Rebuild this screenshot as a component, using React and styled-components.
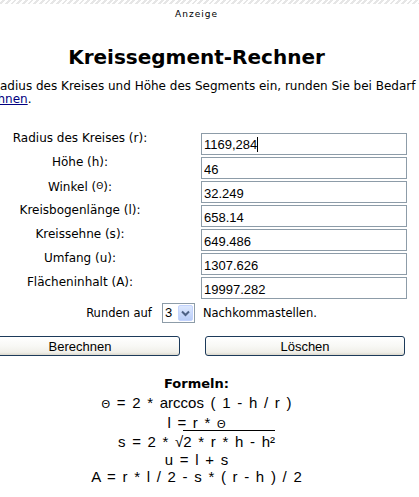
import styled, { createGlobalStyle } from "styled-components";

const GlobalStyle = createGlobalStyle`
  html, body {
    margin: 0;
    padding: 0;
    background: #ffffff;
    overflow: hidden;
  }
  body {
    font-family: "DejaVu Sans", Verdana, sans-serif;
    color: #000000;
  }
`;

// schraffierter Streifen ganz oben
const Stripe = styled.div`
  height: 4px;
  background: repeating-linear-gradient(
    135deg,
    #ffffff 0px,
    #ffffff 2px,
    #e6e6e6 2px,
    #e6e6e6 4px
  );
`;

const Page = styled.div`
  width: 393px;
`;

const AdLabel = styled.div`
  margin-top: 5px;
  font-size: 9px;
  line-height: 11px;
  letter-spacing: 1px;
  text-align: center;
`;

const Title = styled.h1`
  margin: 26px 0 0;
  font-size: 20px;
  line-height: 22px;
  font-weight: bold;
  text-align: center;
`;

const Intro = styled.div`
  margin-top: 12px;
  font-size: 12px;
  line-height: 13px;
`;

// eine Zeile, deren Anfang links aus dem Bild ragt
const IntroLine = styled.div`
  display: flex;
  margin-left: -300px;
  white-space: nowrap;
`;

const Cut = styled.span`
  flex: 0 0 300px;
  text-align: right;
  overflow: hidden;
`;

const Shown = styled.span`
  margin-left: ${(props) => props.$shift || 0}px;
`;

const Link = styled.a`
  color: #000080;
  text-decoration: underline;
`;

const FormGrid = styled.div`
  margin: 27px 0 0 -41px;
  display: grid;
  grid-template-columns: 242px 206px;
  grid-auto-rows: 22px;
  row-gap: 2px;
`;

const Label = styled.div`
  align-self: start;
  text-align: center;
  font-size: 12px;
  line-height: 10px;
  white-space: nowrap;
`;

const Theta = styled.span`
  font-size: 9px;
  vertical-align: 2px;
`;

const Field = styled.input`
  box-sizing: border-box;
  width: 206px;
  height: 22px;
  margin: 0;
  padding: 2px 2px 0;
  border: 1px solid #8d9ca8;
  background: #ffffff;
  font-family: "Liberation Sans", Arial, sans-serif;
  font-size: 13px;
  color: #000000;
  outline: none;
`;

const Caret = styled.span`
  display: inline-block;
  width: 1px;
  height: 15px;
  background: #000;
  vertical-align: -3px;
`;

const FakeField = styled.div`
  box-sizing: border-box;
  width: 206px;
  height: 22px;
  padding: 2px 2px 0;
  border: 1px solid #8d9ca8;
  font-family: "Liberation Sans", Arial, sans-serif;
  font-size: 13px;
  line-height: 17px;
`;

const RoundRow = styled.div`
  grid-column: 1 / -1;
  margin-top: 2px;
  height: 20px;
  padding-left: 37px;
  display: flex;
  justify-content: center;
  align-items: center;
  gap: 6px;
  font-size: 11.5px;
  line-height: 14px;
  white-space: nowrap;
`;

const SelectBox = styled.div`
  box-sizing: border-box;
  width: 33px;
  height: 20px;
  margin: 0 2px 0 4px;
  border: 1px solid #8d9ca8;
  display: flex;
  align-items: center;
  justify-content: space-between;
  padding: 0 1px 0 2px;
  font-family: "Liberation Sans", Arial, sans-serif;
  font-size: 13px;
`;

const DropButton = styled.div`
  box-sizing: border-box;
  width: 15px;
  height: 16px;
  border: 1px solid #c3d3fd;
  border-radius: 2px;
  background: linear-gradient(#dde8fe, #b9cdf8);
  display: flex;
  align-items: center;
  justify-content: center;
`;

const ButtonRow = styled.div`
  grid-column: 1 / -1;
  margin-top: 11px;
  display: grid;
  grid-template-columns: 242px 206px;
`;

const Button = styled.button`
  box-sizing: border-box;
  width: 200px;
  height: 20px;
  margin: 0;
  padding: 0;
  justify-self: ${(props) => (props.$right ? "end" : "center")};
  margin-right: ${(props) => (props.$right ? "2px" : "0")};
  border: 1px solid #1c3a5a;
  border-radius: 3px;
  background: linear-gradient(
    #ffffff 0%,
    #f8f8f5 50%,
    #f0efe9 85%,
    #dcd8cd 100%
  );
  font-family: "Liberation Sans", Arial, sans-serif;
  font-size: 13px;
  line-height: 17px;
  color: #000;
`;

const Formulas = styled.div`
  margin-top: 29px;
  text-align: center;
`;

const FormulaTitle = styled.div`
  font-size: 13px;
  font-weight: bold;
  line-height: 16px;
  margin-bottom: 2px;
`;

const FormulaLine = styled.div`
  font-family: "Liberation Sans", Arial, sans-serif;
  font-size: 15px;
  line-height: 17.5px;
  word-spacing: 2.5px;
  white-space: nowrap;
`;

const SmallTheta = styled.span`
  font-size: 11px;
`;

const Radicand = styled.span`
  border-top: 1px solid #000;
  padding-top: 2px;
`;

function ChevronDown() {
  return (
    <svg width="9" height="7" viewBox="0 0 9 7">
      <path
        d="M1 1.5 L4.5 5 L8 1.5"
        fill="none"
        stroke="#4d6185"
        strokeWidth="2"
      />
    </svg>
  );
}

const rows = [
  { label: "Höhe (h):", value: "46" },
  { label: <>Winkel (<Theta>Θ</Theta>):</>, value: "32.249" },
  { label: "Kreisbogenlänge (l):", value: "658.14" },
  { label: "Kreissehne (s):", value: "649.486" },
  { label: "Umfang (u):", value: "1307.626" },
  { label: "Flächeninhalt (A):", value: "19997.282" },
];

export default function App() {
  return (
    <>
      <GlobalStyle />
      <Stripe />
      <Page>
        <AdLabel>Anzeige</AdLabel>
        <Title>Kreissegment-Rechner</Title>
        <Intro>
          <IntroLine>
            <Cut>Geben Sie den R</Cut>
            <Shown>
              adius des Kreises und Höhe des Segments ein, runden Sie bei Bedarf
              und klicken Sie auf
            </Shown>
          </IntroLine>
          <IntroLine>
            <Cut>
              <Link href="#">Berec</Link>
            </Cut>
            <Shown $shift={-2.5}>
              <Link href="#">hnen</Link>.
            </Shown>
          </IntroLine>
        </Intro>

        <FormGrid>
          <Label>Radius des Kreises (r):</Label>
          <FakeField>
            1169,284
            <Caret />
          </FakeField>
          {rows.map((row, i) => (
            <FormRowFragment key={i} label={row.label} value={row.value} />
          ))}
          <RoundRow>
            <span>Runden auf</span>
            <SelectBox>
              <span>3</span>
              <DropButton>
                <ChevronDown />
              </DropButton>
            </SelectBox>
            <span>Nachkommastellen.</span>
          </RoundRow>
          <ButtonRow>
            <Button>Berechnen</Button>
            <Button $right>Löschen</Button>
          </ButtonRow>
        </FormGrid>

        <Formulas>
          <FormulaTitle>Formeln:</FormulaTitle>
          <FormulaLine>
            <SmallTheta>Θ</SmallTheta> = 2 * arccos ( 1 - h / r )
          </FormulaLine>
          <FormulaLine>
            l = r * <SmallTheta>Θ</SmallTheta>
          </FormulaLine>
          <FormulaLine>
            s = 2 * √<Radicand>2 * r * h - h²</Radicand>
          </FormulaLine>
          <FormulaLine>u = l + s</FormulaLine>
          <FormulaLine>A = r * l / 2 - s * ( r - h ) / 2</FormulaLine>
        </Formulas>
      </Page>
    </>
  );
}

function FormRowFragment({ label, value }) {
  return (
    <>
      <Label>{label}</Label>
      <Field readOnly value={value} />
    </>
  );
}
